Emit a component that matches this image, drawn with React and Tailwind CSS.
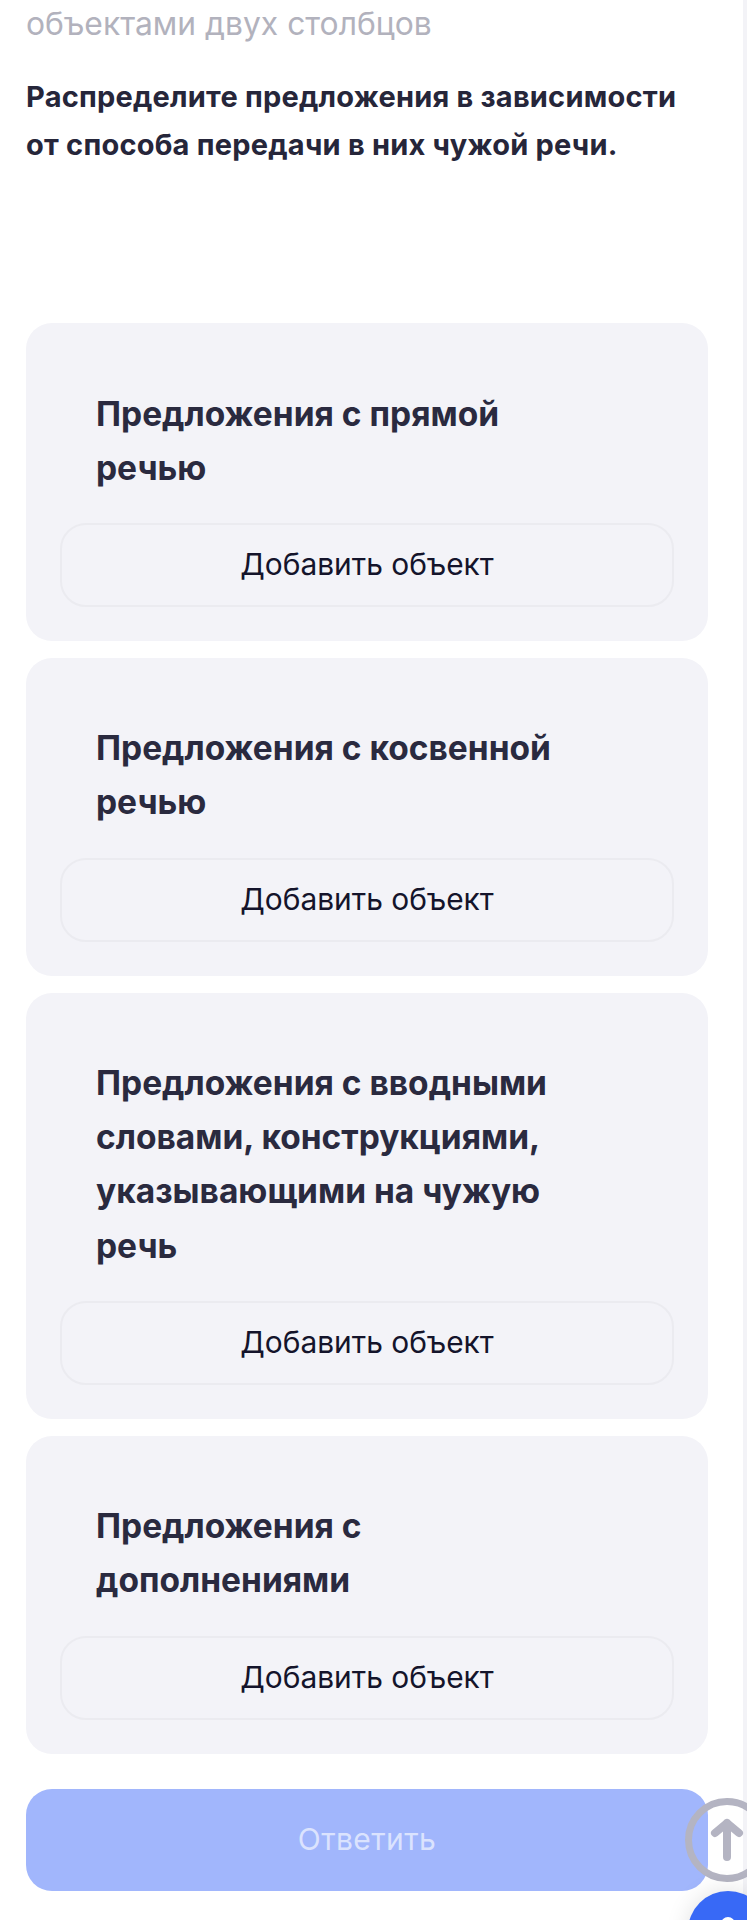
const cards = [
  'Предложения с прямой речью',
  'Предложения с косвенной речью',
  'Предложения с вводными словами, конструкциями, указывающими на чужую речь',
  'Предложения с дополнениями',
];

export default function App() {
  return (
    <div className="relative w-[747px] h-[1920px] overflow-hidden bg-white font-['Inter','Noto_Sans',sans-serif]">
      <div className="absolute right-0 top-0 bottom-0 w-[4px] bg-[#f3f3f7]"></div>

      <div className="pl-[26px] pr-[39px]">
        <p className="text-[31.8px] leading-[48px] text-[#b2b2bd]">объектами двух столбцов</p>
        <h1 className="mt-[25px] text-[29px] leading-[48px] font-bold text-[#26263a] tracking-[0.22px]">
          Распределите предложения в зависимости от способа передачи в них чужой речи.
        </h1>

        <div className="mt-[154px] flex flex-col gap-[17px]">
          {cards.map((title, i) => (
            <div key={i} className="bg-[#f3f3f8] rounded-[26px] pt-[63.5px] pb-[34px] px-[34px]">
              <h2 className="ml-[36px] w-[480px] text-[33.5px] leading-[54.15px] font-bold text-[#2a2a3f]">{title}</h2>
              <button className="mt-[28px] w-full h-[84px] rounded-[26px] border-2 border-[#ebebf0] text-[29.9px] text-[#14142b] flex items-center justify-center">
                Добавить объект
              </button>
            </div>
          ))}
        </div>

        <button className="mt-[35px] w-full h-[102px] rounded-[26px] bg-[#a1b6fc] text-[30px] tracking-[0.4px] text-[#dbe3fe] flex items-center justify-center">
          Ответить
        </button>
      </div>

      {/* scroll to top */}
      <svg className="absolute left-[685px] top-[1798px]" width="84" height="84" viewBox="0 0 84 84" fill="none">
        <circle cx="42" cy="42" r="38.5" stroke="#b4b4c2" strokeWidth="7" />
        <path d="M42 59V25M30 35L42 25L54 35" stroke="#b4b4c2" strokeWidth="8" strokeLinecap="round" strokeLinejoin="round" />
      </svg>

      {/* chat bubble cut off at the bottom */}
      <div className="absolute left-[688px] top-[1891px] w-[80px] h-[80px] rounded-full bg-[#3869f6] shadow-[0_0_24px_rgba(0,0,0,0.12)] flex justify-center pt-[26px]">
        <div className="w-[14px] h-[14px] rounded-full border-[4px] border-white"></div>
      </div>
    </div>
  );
}
